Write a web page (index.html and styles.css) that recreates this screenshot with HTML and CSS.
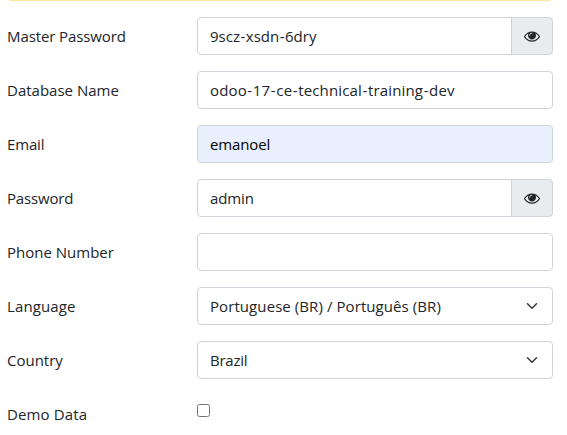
FILE: index.html
```html
<!DOCTYPE html>
<html lang="en">
<head>
<meta charset="utf-8">
<title>Create Database</title>
<link rel="stylesheet" href="styles.css">
</head>
<body>
<svg class="defs" aria-hidden="true">
  <symbol id="eye" viewBox="0 0 1792 1792"><path d="M1664 960q-152-236-381-353 61 104 61 225 0 185-131.500 316.500t-316.500 131.500-316.500-131.500-131.500-316.500q0-121 61-225-229 117-381 353 133 205 333.500 326.500t434.500 121.500 434.500-121.500 333.500-326.500zm-720-384q0-20-14-34t-34-14q-125 0-214.500 89.500t-89.500 214.500q0 20 14 34t34 14 34-14 14-34q0-86 61-147t147-61q20 0 34-14t14-34zm848 384q0 34-20 69-140 230-376.500 368.500t-499.500 138.500-499.500-139-376.500-368q-20-35-20-69t20-69q140-229 376.500-368t499.500-139 499.500 139 376.500 368q20 35 20 69z"/></symbol>
  <symbol id="chevron" viewBox="0 0 16 16"><path d="m2 5 6 6 6-6"/></symbol>
</svg>
<div class="alert-edge"></div>
<form class="form">
  <div class="row"><div class="label"><span class="l-master">Master Password</span></div><div class="control grouped"><span class="v-master">9scz<i>-</i>xsdn<i>-</i>6dry</span></div><div class="addon"><svg class="eye"><use href="#eye"/></svg></div></div>
  <div class="row"><div class="label"><span>Database Name</span></div><div class="control"><span class="v-db">odoo<i>-</i>17<i>-</i>ce<i>-</i>technical<i>-</i>training<i>-</i>dev</span></div></div>
  <div class="row"><div class="label"><span class="l-email">Email</span></div><div class="control autofill"><span class="v-email">emanoel</span></div></div>
  <div class="row"><div class="label"><span class="l-pass">Password</span></div><div class="control grouped"><span class="v-pass">admin</span></div><div class="addon"><svg class="eye"><use href="#eye"/></svg></div></div>
  <div class="row"><div class="label"><span>Phone Number</span></div><div class="control"></div></div>
  <div class="row"><div class="label"><span class="l-lang">Language</span></div><div class="control select"><span class="v-lang">Portuguese (BR) / Português (BR)</span><svg class="chevron"><use href="#chevron"/></svg></div></div>
  <div class="row"><div class="label"><span>Country</span></div><div class="control select"><span class="v-country">Brazil</span><svg class="chevron"><use href="#chevron"/></svg></div></div>
  <div class="row"><div class="label"><span class="l-demo">Demo Data</span></div><input class="check" type="checkbox" aria-label="Demo Data"></div>
</form>
</body>
</html>
```
FILE: styles.css
```css
* { box-sizing: border-box; }
body {
  margin: 0;
  height: 435px;
  overflow: hidden;
  background: #fff;
  color: #212529;
  font: 15px/24px "Open Sans", "Noto Sans", sans-serif;
}
.defs { display: none; }
.alert-edge { height: 1px; margin: 0 16px 0 9px; background: #ffe69c; }
.form { display: flex; flex-direction: column; gap: 16px; padding: 16px 14px 0 7px; }
.row { display: flex; height: 38px; }
.label { width: 190px; padding-top: 7px; white-space: nowrap; }
.control {
  flex: 1;
  display: flex;
  align-items: flex-start;
  padding: 6px 12px;
  border: 1px solid #ced4da;
  border-radius: 4px;
  white-space: nowrap;
}
.grouped { border-radius: 4px 0 0 4px; }
.autofill { background: #e8f0fe; color: #000; }
.select { justify-content: space-between; }
.addon {
  width: 42px;
  margin-left: -1px;
  padding: 10px 0 0 11.5px;
  border: 1px solid #ced4da;
  border-radius: 0 4px 4px 0;
  background: #e9ecef;
}
.eye { display: block; width: 16px; height: 16px; fill: #212529; }
.chevron {
  width: 16px;
  height: 12px;
  margin-top: 6px;
  fill: none;
  stroke: #343a40;
  stroke-width: 2;
  stroke-linecap: round;
  stroke-linejoin: round;
}
.check { width: 13px; height: 13px; margin: 9px 0 0; }

/* Tracking per text */
.control i { font-style: normal; padding: 0 .5px; }
.l-master { letter-spacing: -.1px; }
.l-email, .l-pass { letter-spacing: -.17px; }
.l-lang, .l-demo { letter-spacing: .12px; }
.v-db { letter-spacing: .15px; }
.v-email, .v-pass { letter-spacing: -.12px; }
.v-lang { letter-spacing: .08px; }
.v-country { letter-spacing: -.25px; }
```
